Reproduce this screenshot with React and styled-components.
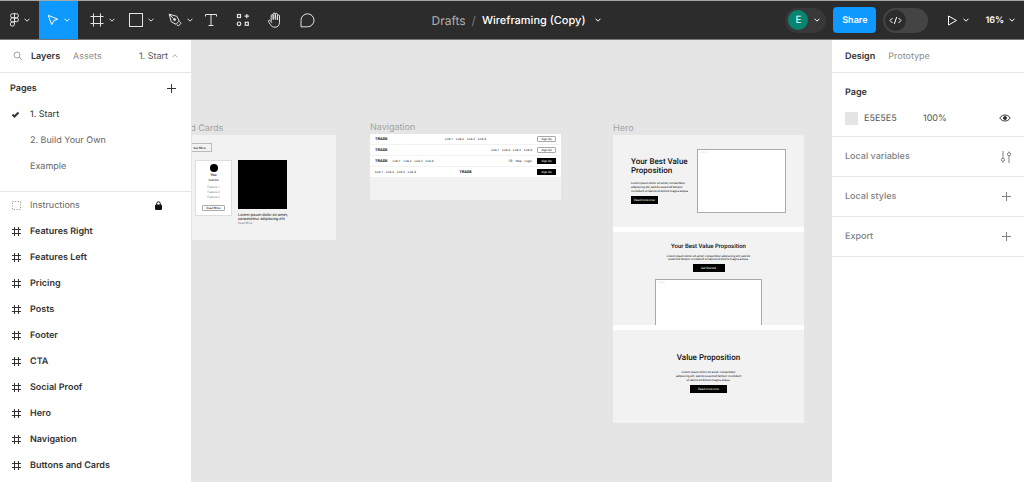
import React, { useState } from "react";
import styled, { createGlobalStyle, css } from "styled-components";

const GlobalStyle = createGlobalStyle`
  * {
    box-sizing: border-box;
  }
  body {
    margin: 0;
    font-family: Inter, "Liberation Sans", sans-serif;
    font-size: 9px;
    color: #333;
    text-rendering: geometricPrecision;
  }
  button, input {
    margin: 0;
    padding: 0;
    border: 0;
    background: none;
    color: inherit;
    font: inherit;
    text-rendering: inherit;
  }
  ul {
    list-style: none;
    margin: 0;
    padding: 0;
  }
  h2, h3, p {
    margin: 0;
  }
  svg {
    display: block;
    flex: none;
  }
`;

const Page = styled.div`
  display: flex;
  flex-direction: column;
  height: 100vh;
  overflow: hidden;
`;

/* ---------- toolbar ---------- */

const Toolbar = styled.header`
  display: grid;
  grid-template-columns: 1fr auto 1fr;
  flex: none;
  height: 40px;
  border-top: 1px solid #a3a8a6;
  border-bottom: 1px solid #777;
  background: #2c2c2c;
  color: #fff;
`;

const ToolGroup = styled.div`
  display: flex;
`;

const Tool = styled.button`
  display: flex;
  align-items: center;
  justify-content: center;
  gap: 5px;
  width: ${({ $menu }) => ($menu ? "39px" : "32px")};
  padding-left: ${({ $indent }) => ($indent ? "10px" : "0")};
  background: ${({ $active }) => ($active ? "#0d99ff" : "none")};
  color: ${({ $active }) => ($active ? "#fff" : "#e4e4e4")};
`;

const FileName = styled.div`
  display: flex;
  align-items: center;
  gap: 6px;
  padding-left: 8px;
  font-size: 12px;
`;

const Folder = styled.a`
  color: #b3b3b3;
  text-decoration: none;
`;

const Slash = styled.span`
  color: #777;
`;

const FileButton = styled.button`
  display: flex;
  align-items: center;
  gap: 9px;
  font-size: 11px;
  font-weight: 500;
`;

const Actions = styled.div`
  display: flex;
  align-items: center;
  justify-content: flex-end;
  gap: 7px;
  padding-right: 9px;
`;

const UserMenu = styled.button`
  display: flex;
  align-items: center;
  gap: 6px;
  height: 25px;
  padding: 0 6px 0 3px;
  border-radius: 13px;
  background: #383838;
`;

const Avatar = styled.span`
  width: 20px;
  border-radius: 50%;
  background: #078571;
  font-size: 10px;
  line-height: 20px;
  text-align: center;
`;

const ShareButton = styled.button`
  width: 43px;
  height: 26px;
  border-radius: 4px;
  background: #0d99ff;
  font-weight: 600;
`;

const DevSwitch = styled.label`
  position: relative;
  display: flex;
  align-items: center;
  width: 45px;
  height: 25px;
  padding: 2px;
  border-radius: 13px;
  background: #444;
`;

const DevInput = styled.input`
  position: absolute;
  inset: 0;
  opacity: 0;
`;

const Knob = styled.span`
  display: grid;
  place-items: center;
  width: 21px;
  height: 21px;
  margin-left: ${({ $on }) => ($on ? "20px" : "0")};
  border-radius: 50%;
  background: #2c2c2c;
`;

const Present = styled.button`
  display: flex;
  align-items: center;
  gap: 5px;
  margin: 0 9px 0 12px;
`;

const Zoom = styled.button`
  display: flex;
  align-items: center;
  gap: 5px;
  font-weight: 600;
`;

/* ---------- side panels ---------- */

const Body = styled.div`
  display: flex;
  flex: 1;
  min-height: 0;
`;

const Panel = styled.aside`
  flex: none;
  width: 192px;
  overflow: hidden;
  background: #fff;
  ${({ $right }) =>
    !$right &&
    css`
      border-right: 1px solid #e6e6e6;
    `}
`;

const Tabs = styled.div`
  display: flex;
  align-items: center;
  gap: 13px;
  height: 33px;
  padding: 0 13px;
  border-bottom: 1px solid #e6e6e6;
`;

const Tab = styled.button`
  color: ${({ $active }) => ($active ? "#333" : "#8c8c8c")};
  font-weight: ${({ $active }) => ($active ? 600 : 400)};
`;

const PagePicker = styled.button`
  display: flex;
  align-items: center;
  gap: 4px;
  margin-left: auto;
  color: #555;

  svg {
    color: #aaa;
  }
`;

const SearchButton = styled.button`
  margin-right: -5px;
  color: #a0a0a0;
`;

const Pages = styled.section`
  padding-bottom: 12px;
  border-bottom: 1px solid #e6e6e6;
`;

const PagesHeader = styled.div`
  display: flex;
  align-items: center;
  justify-content: space-between;
  height: 28px;
  padding: 2px 14px 0 10px;
`;

const PanelTitle = styled.h2`
  font-size: 9px;
  font-weight: 600;
`;

const Row = styled.button`
  display: grid;
  grid-template-columns: 19px 1fr auto;
  align-items: center;
  width: 100%;
  height: 26px;
  padding: 0 29px 0 11px;
  text-align: left;
  color: ${({ $muted }) => ($muted ? "#666" : "#333")};
  font-weight: ${({ $strong }) => ($strong ? 600 : 400)};
`;

const PageSettings = styled.section`
  padding: 14px 13px 5px;
  border-bottom: 1px solid #e6e6e6;
`;

const Fill = styled.div`
  display: flex;
  align-items: center;
  height: 26px;
  margin-top: 7px;
`;

const Swatch = styled.button`
  width: 13px;
  height: 13px;
  margin-right: 6px;
  background: #e5e5e5;
`;

const FillInput = styled.input`
  width: 59px;
  color: #555;
`;

const IconButton = styled.button`
  display: grid;
  place-items: center;
  width: 12px;
  margin-left: auto;
`;

const Section = styled.section`
  display: flex;
  align-items: center;
  height: 40px;
  padding: 0 12px 0 13px;
  border-bottom: 1px solid #e6e6e6;
  color: #808080;
`;

const SectionTitle = styled.h2`
  font-size: 9px;
  font-weight: 500;
`;

/* ---------- canvas ---------- */

const Canvas = styled.main`
  position: relative;
  flex: 1;
  overflow: hidden;
  background: #e5e5e5;
  font-family: Roboto, "Liberation Sans", sans-serif;
  font-size: 3px;
  line-height: 4px;
  color: #111;
`;

const Artboard = styled.section`
  position: absolute;
  left: ${({ $x }) => $x}px;
  top: ${({ $y }) => $y}px;
  width: 191px;
`;

const ArtboardName = styled.h2`
  font-family: Inter, "Liberation Sans", sans-serif;
  font-size: 9px;
  font-weight: 400;
  line-height: 12px;
  color: #a3a3a3;
`;

const Sheet = styled.div`
  height: ${({ $height }) => $height}px;
  background: #f2f2f2;
`;

const NavRow = styled.div`
  display: grid;
  grid-template-columns: ${({ $columns }) => $columns};
  column-gap: 5px;
  align-items: center;
  height: 10px;
  margin-bottom: 1px;
  padding: 0 5px;
  background: #fff;
`;

const Brand = styled.span`
  font-size: 4px;
  font-weight: 700;
`;

const Links = styled.nav`
  display: flex;
  gap: 3px;
  justify-content: ${({ $align }) => $align || "flex-start"};
`;

const SmallLink = styled.a`
  color: #111;
  text-decoration: none;
`;

const MiniButton = styled.button`
  flex: none;
  height: ${({ $tall }) => ($tall ? "8px" : "6px")};
  width: ${({ $width }) => $width || "19px"};
  border: 1px solid ${({ $light }) => ($light ? "#aaa" : "#000")};
  border-radius: ${({ $light }) => ($light ? "1px" : "0")};
  background: ${({ $light }) => ($light ? "#fff" : "#000")};
  color: ${({ $light }) => ($light ? "#111" : "#fff")};
  line-height: 4px;
`;

const CardsSheet = styled(Sheet)`
  display: grid;
  grid-template-columns: 37px 49px;
  grid-template-rows: 17px auto;
  gap: 0 6px;
  align-items: start;
  padding: 8px 0 0 50px;
`;

const OutlineButton = styled.button`
  grid-column: 1 / -1;
  width: 25px;
  height: 9px;
  margin-left: -8px;
  border: 1px solid #bbb;
  line-height: 4px;
`;

const PersonCard = styled.div`
  display: flex;
  flex-direction: column;
  align-items: center;
  gap: 1px;
  height: 56px;
  padding: 3px 3px 4px;
  border: 1px solid #ddd;
  background: #fff;
`;

const Face = styled.span`
  width: 8px;
  height: 8px;
  border-radius: 50%;
  background: #000;
`;

const Faint = styled.span`
  color: #888;
`;

const Subtitle = styled.span`
  margin-bottom: 2px;
`;

const CardAction = styled(MiniButton)`
  margin-top: auto;
`;

const PostImage = styled.div`
  height: 49px;
  margin-bottom: 4px;
  background: #000;
`;

const PostTitle = styled.h3`
  font-size: 4px;
  font-weight: 400;
  line-height: 4px;
  white-space: nowrap;
`;

const HeroBoard = styled.div`
  display: flex;
  flex-direction: column;
  gap: 5px;
  background: #fff;
`;

const SplitHero = styled.div`
  display: grid;
  grid-template-columns: minmax(0, 1fr) 89px;
  height: 92px;
  padding: 14px 18px;
  background: #f2f2f2;
  white-space: nowrap;
`;

const StackedHero = styled.div`
  display: flex;
  flex-direction: column;
  align-items: center;
  height: 93px;
  padding-top: ${({ $top }) => $top}px;
  overflow: hidden;
  background: #f2f2f2;
  text-align: center;
  white-space: nowrap;
`;

const Headline = styled.h3`
  font-size: ${({ $size }) => $size}px;
  font-weight: 500;
  line-height: 9px;
`;

const Copy = styled.p`
  margin: ${({ $gap }) => $gap}px 0 3px;
  line-height: ${({ $line }) => $line || 4}px;
`;

const HeroText = styled.div`
  padding-top: 8px;
`;

const BrowserBox = styled.div`
  flex: none;
  height: 64px;
  width: ${({ $width }) => $width || "auto"};
  margin-top: ${({ $top }) => $top || 0}px;
  padding-left: 2px;
  border: 1px solid #aaa;
  background: #fff;
  color: #999;
  text-align: left;
`;

/* ---------- icons ---------- */

const Icon = ({ size = 16, width = 1, children }) => (
  <svg
    width={size}
    height={size}
    viewBox={`0 0 ${size} ${size}`}
    fill="none"
    stroke="currentColor"
    strokeWidth={width}
    aria-hidden="true"
  >
    {children}
  </svg>
);

const Chevron = ({ up }) => (
  <svg width="6" height="4" viewBox="0 0 6 4" fill="none" stroke="currentColor" aria-hidden="true">
    <path d={up ? "M.5 3.3 3 .8l2.5 2.5" : "M.5.7 3 3.2 5.5.7"} />
  </svg>
);

const FigmaIcon = () => (
  <svg width="9" height="14" viewBox="0 0 9 14" fill="none" stroke="currentColor" aria-hidden="true">
    <path d="M4.5.7H2.6a2 2 0 0 0 0 4.1h1.9zM4.5.7h1.9a2 2 0 0 1 0 4.1H4.5zM4.5 4.8H2.6a2 2 0 0 0 0 4.2h1.9zM4.5 9H2.6a2.1 2.1 0 1 0 1.9 2.2z" />
    <circle cx="6.4" cy="6.9" r="2" />
  </svg>
);

const MoveIcon = () => (
  <Icon size={12}>
    <path d="M1.3 1.3 10.6 5.2 6.7 6.7 4.7 10.8z" strokeLinejoin="round" />
  </Icon>
);

const FrameIcon = () => (
  <Icon size={14}>
    <path d="M3.5.5v13M10.5.5v13M.5 3.5h13M.5 10.5h13" />
  </Icon>
);

const RectIcon = () => (
  <Icon size={14}>
    <rect x=".5" y=".5" width="13" height="13" />
  </Icon>
);

const PenIcon = () => (
  <Icon size={14}>
    <path
      d="M1.2 1.2 8.8 3.3 11.3 8 8 11.3 3.3 8.8zM1.2 1.2l4.5 4.5M11.6 8.6l1.4 1.7-2.7 2.7-1.7-1.4"
      strokeLinejoin="round"
    />
    <circle cx="6.6" cy="6.6" r="1" fill="currentColor" />
  </Icon>
);

const TextIcon = () => (
  <Icon size={14}>
    <path d="M1.5 3.5v-2h11v2M7 1.5v11M4.5 12.5h5" />
  </Icon>
);

const ResourcesIcon = () => (
  <Icon size={14} width={1.2}>
    <rect x="1.5" y="1.5" width="3" height="3" />
    <rect x="9.3" y="9.3" width="3" height="3" />
    <circle cx="3" cy="10.8" r="1.8" />
    <path d="M10.8.9v4.4M8.6 3.1H13" />
  </Icon>
);

const HandIcon = () => (
  <Icon size={16}>
    <path
      d="M4.2 9V3.7a1 1 0 0 1 2 0V7.5V2a1 1 0 0 1 2.1 0v5.5V2.3a1 1 0 0 1 2.1 0V8V4a1 1 0 0 1 2.1 0v6.2c0 3-1.7 5-4.5 5-2.3 0-3.5-.8-4.6-2.7L1.5 9.7c-.7-1.3.8-2.1 1.6-1.2l1.6 2"
      strokeLinecap="round"
      strokeLinejoin="round"
    />
  </Icon>
);

const CommentIcon = () => (
  <Icon size={15}>
    <path d="M1 13.8V7.3A6.500 6.500 0 1 1 7.500 13.8z" strokeLinejoin="round" />
  </Icon>
);

const CodeIcon = () => (
  <Icon size={13}>
    <path d="M3.5 4 1 6.5 3.5 9M9.5 4 12 6.5 9.5 9M7.7 3 5.3 10" />
  </Icon>
);

const PlayIcon = () => (
  <Icon size={11}>
    <path d="M1.5 1v9l8-4.5z" strokeLinejoin="round" />
  </Icon>
);

const SearchIcon = () => (
  <Icon size={10}>
    <circle cx="4" cy="4" r="3" />
    <path d="m6.2 6.2 3 3" />
  </Icon>
);

const PlusIcon = () => (
  <Icon size={11}>
    <path d="M5.5 1v9M1 5.5h9" />
  </Icon>
);

const CheckIcon = () => (
  <Icon size={9} width={2}>
    <path d="m1.5 4.5 2 2 4-4" />
  </Icon>
);

const LayerIcon = () => (
  <Icon size={11}>
    <path d="M3.5 1v9M7.5 1v9M1 3.5h9M1 7.5h9" />
  </Icon>
);

const GroupIcon = () => (
  <Icon size={11}>
    <rect x="1.5" y="1.5" width="8" height="8" strokeDasharray="1 1.7" stroke="#888" />
  </Icon>
);

const LockIcon = () => (
  <svg width="7" height="9" viewBox="0 0 7 9" fill="none" stroke="#111" aria-hidden="true">
    <path d="M1.7 4V2.6a1.8 1.8 0 0 1 3.6 0V4" />
    <rect x=".5" y="4" width="6" height="4.5" rx=".3" fill="#111" />
  </svg>
);

const EyeIcon = () => (
  <Icon size={12}>
    <path d="M.8 6C3.2 2 8.8 2 11.2 6 8.8 10 3.2 10 .8 6z" />
    <circle cx="6" cy="6" r="1.5" fill="currentColor" />
  </Icon>
);

const VariablesIcon = () => (
  <Icon size={12}>
    <path d="M3 0v7.2M3 10.3v1.2M9 12V4.800M9 1.7V.5" />
    <circle cx="3" cy="8.8" r="1.6" />
    <circle cx="9" cy="3.2" r="1.6" />
  </Icon>
);

/* ---------- content ---------- */

const menuTools = [
  { name: "Main menu", icon: FigmaIcon },
  { name: "Move", icon: MoveIcon, active: true },
  { name: "Frame", icon: FrameIcon, indent: true },
  { name: "Rectangle", icon: RectIcon, indent: true },
  { name: "Pen", icon: PenIcon, indent: true },
];

const tools = [
  { name: "Text", icon: TextIcon },
  { name: "Resources", icon: ResourcesIcon },
  { name: "Hand tool", icon: HandIcon },
  { name: "Comment", icon: CommentIcon },
];

const pages = ["1. Start", "2. Build Your Own", "Example"];

const layers = [
  "Features Right",
  "Features Left",
  "Pricing",
  "Posts",
  "Footer",
  "CTA",
  "Social Proof",
  "Hero",
  "Navigation",
  "Buttons and Cards",
];

const TopBar = () => {
  const [dev, setDev] = useState(false);
  return (
    <Toolbar>
      <ToolGroup>
        {menuTools.map(({ name, icon: ToolIcon, active, indent }) => (
          <Tool key={name} aria-label={name} $menu $active={active} $indent={indent}>
            <ToolIcon />
            <Chevron />
          </Tool>
        ))}
        {tools.map(({ name, icon: ToolIcon }) => (
          <Tool key={name} aria-label={name}>
            <ToolIcon />
          </Tool>
        ))}
      </ToolGroup>
      <FileName>
        <Folder href="#drafts">Drafts</Folder>
        <Slash>/</Slash>
        <FileButton>
          Wireframing (Copy)
          <Chevron />
        </FileButton>
      </FileName>
      <Actions>
        <UserMenu>
          <Avatar>E</Avatar>
          <Chevron />
        </UserMenu>
        <ShareButton>Share</ShareButton>
        <DevSwitch>
          <DevInput
            type="checkbox"
            aria-label="Dev Mode"
            checked={dev}
            onChange={() => setDev(!dev)}
          />
          <Knob $on={dev}>
            <CodeIcon />
          </Knob>
        </DevSwitch>
        <Present aria-label="Present">
          <PlayIcon />
          <Chevron />
        </Present>
        <Zoom>
          16%
          <Chevron />
        </Zoom>
      </Actions>
    </Toolbar>
  );
};

const LayersPanel = () => {
  const [current, setCurrent] = useState(pages[0]);
  return (
    <Panel>
      <Tabs>
        <SearchButton aria-label="Search">
          <SearchIcon />
        </SearchButton>
        <Tab $active>Layers</Tab>
        <Tab>Assets</Tab>
        <PagePicker>
          {current}
          <Chevron up />
        </PagePicker>
      </Tabs>
      <Pages>
        <PagesHeader>
          <PanelTitle>Pages</PanelTitle>
          <button aria-label="Add page">
            <PlusIcon />
          </button>
        </PagesHeader>
        <ul>
          {pages.map((page) => (
            <li key={page}>
              <Row $muted={page !== current} onClick={() => setCurrent(page)}>
                <span>{page === current && <CheckIcon />}</span>
                {page}
              </Row>
            </li>
          ))}
        </ul>
      </Pages>
      <ul>
        <li>
          <Row $muted>
            <GroupIcon />
            Instructions
            <LockIcon />
          </Row>
        </li>
        {layers.map((layer) => (
          <li key={layer}>
            <Row $strong>
              <LayerIcon />
              {layer}
            </Row>
          </li>
        ))}
      </ul>
    </Panel>
  );
};

const DesignPanel = () => (
  <Panel $right>
    <Tabs>
      <Tab $active>Design</Tab>
      <Tab>Prototype</Tab>
    </Tabs>
    <PageSettings>
      <PanelTitle>Page</PanelTitle>
      <Fill>
        <Swatch aria-label="Page colour" />
        <FillInput aria-label="Colour" defaultValue="E5E5E5" />
        <FillInput aria-label="Opacity" defaultValue="100%" />
        <IconButton aria-label="Show in exports">
          <EyeIcon />
        </IconButton>
      </Fill>
    </PageSettings>
    <Section>
      <SectionTitle>Local variables</SectionTitle>
      <IconButton aria-label="Open variables">
        <VariablesIcon />
      </IconButton>
    </Section>
    <Section>
      <SectionTitle>Local styles</SectionTitle>
      <IconButton aria-label="Add style">
        <PlusIcon />
      </IconButton>
    </Section>
    <Section>
      <SectionTitle>Export</SectionTitle>
      <IconButton aria-label="Add export">
        <PlusIcon />
      </IconButton>
    </Section>
  </Panel>
);

const LinkList = ({ names = ["Link 1", "Link 2", "Link 3", "Link 4"], align }) => (
  <Links $align={align}>
    {names.map((name) => (
      <SmallLink key={name} href="#link">
        {name}
      </SmallLink>
    ))}
  </Links>
);

const CardsBoard = () => (
  <Artboard $x={-47} $y={83}>
    <ArtboardName>Buttons and Cards</ArtboardName>
    <CardsSheet $height={105}>
      <OutlineButton>See More</OutlineButton>
      <PersonCard>
        <Face />
        <b>Title</b>
        <Subtitle>Subtitle</Subtitle>
        <Faint>Feature 1</Faint>
        <Faint>Feature 2</Faint>
        <Faint>Feature 3</Faint>
        <CardAction $light $width="23px">
          Read More
        </CardAction>
      </PersonCard>
      <div>
        <PostImage />
        <PostTitle>
          Lorem ipsum dolor sit amet,
          <br />
          consectetur adipiscing elit
        </PostTitle>
        <Faint>Read More</Faint>
      </div>
    </CardsSheet>
  </Artboard>
);

const NavigationBoard = () => (
  <Artboard $x={178} $y={82}>
    <ArtboardName>Navigation</ArtboardName>
    <Sheet $height={66}>
      <NavRow $columns="19px 1fr 19px">
        <Brand>TRADE</Brand>
        <LinkList align="center" />
        <MiniButton $light>Sign Up</MiniButton>
      </NavRow>
      <NavRow $columns="19px 1fr 19px">
        <Brand>TRADE</Brand>
        <LinkList align="flex-end" />
        <MiniButton $light>Sign Up</MiniButton>
      </NavRow>
      <NavRow $columns="auto 1fr auto 19px">
        <Brand>TRADE</Brand>
        <LinkList />
        <LinkList names={["FR", "Help", "Login"]} />
        <MiniButton>Sign Up</MiniButton>
      </NavRow>
      <NavRow $columns="1fr auto 1fr">
        <LinkList />
        <Brand>TRADE</Brand>
        <Links $align="flex-end">
          <MiniButton>Sign Up</MiniButton>
        </Links>
      </NavRow>
    </Sheet>
  </Artboard>
);

const HeroArtboard = () => (
  <Artboard $x={421} $y={83}>
    <ArtboardName>Hero</ArtboardName>
    <HeroBoard>
      <SplitHero>
        <HeroText>
          <Headline $size={8}>
            Your Best Value
            <br />
            Proposition
          </Headline>
          <Copy $gap={6}>
            Lorem ipsum dolor sit amet, consectetur
            <br />
            adipiscing elit, sed do eiusmod tempor
            <br />
            incididunt ut labore et dolore magna aliqua.
          </Copy>
          <MiniButton $tall $width="27px">
            Read more now
          </MiniButton>
        </HeroText>
        <BrowserBox>○ ○ ○</BrowserBox>
      </SplitHero>
      <StackedHero $top={10}>
        <Headline $size={6}>Your Best Value Proposition</Headline>
        <Copy $gap={4} $line={3}>
          Lorem ipsum dolor sit amet, consectetur adipiscing elit, sed do
          <br />
          eiusmod tempor incididunt ut labore et dolore magna aliqua.
        </Copy>
        <MiniButton $tall $width="32px">
          Get Started
        </MiniButton>
        <BrowserBox $width="107px" $top={7}>
          ○ ○ ○
        </BrowserBox>
      </StackedHero>
      <StackedHero $top={23}>
        <Headline $size={8}>Value Proposition</Headline>
        <Copy $gap={8}>
          Lorem ipsum dolor sit amet, consectetur
          <br />
          adipiscing elit, sed do eiusmod tempor incididunt
          <br />
          ut labore et dolore magna aliqua.
        </Copy>
        <MiniButton $tall $width="37px">
          Read more now
        </MiniButton>
      </StackedHero>
    </HeroBoard>
  </Artboard>
);

const App = () => {
  return (
    <>
      <GlobalStyle />
      <Page>
        <TopBar />
        <Body>
          <LayersPanel />
          <Canvas>
            <CardsBoard />
            <NavigationBoard />
            <HeroArtboard />
          </Canvas>
          <DesignPanel />
        </Body>
      </Page>
    </>
  );
};

export default App;
